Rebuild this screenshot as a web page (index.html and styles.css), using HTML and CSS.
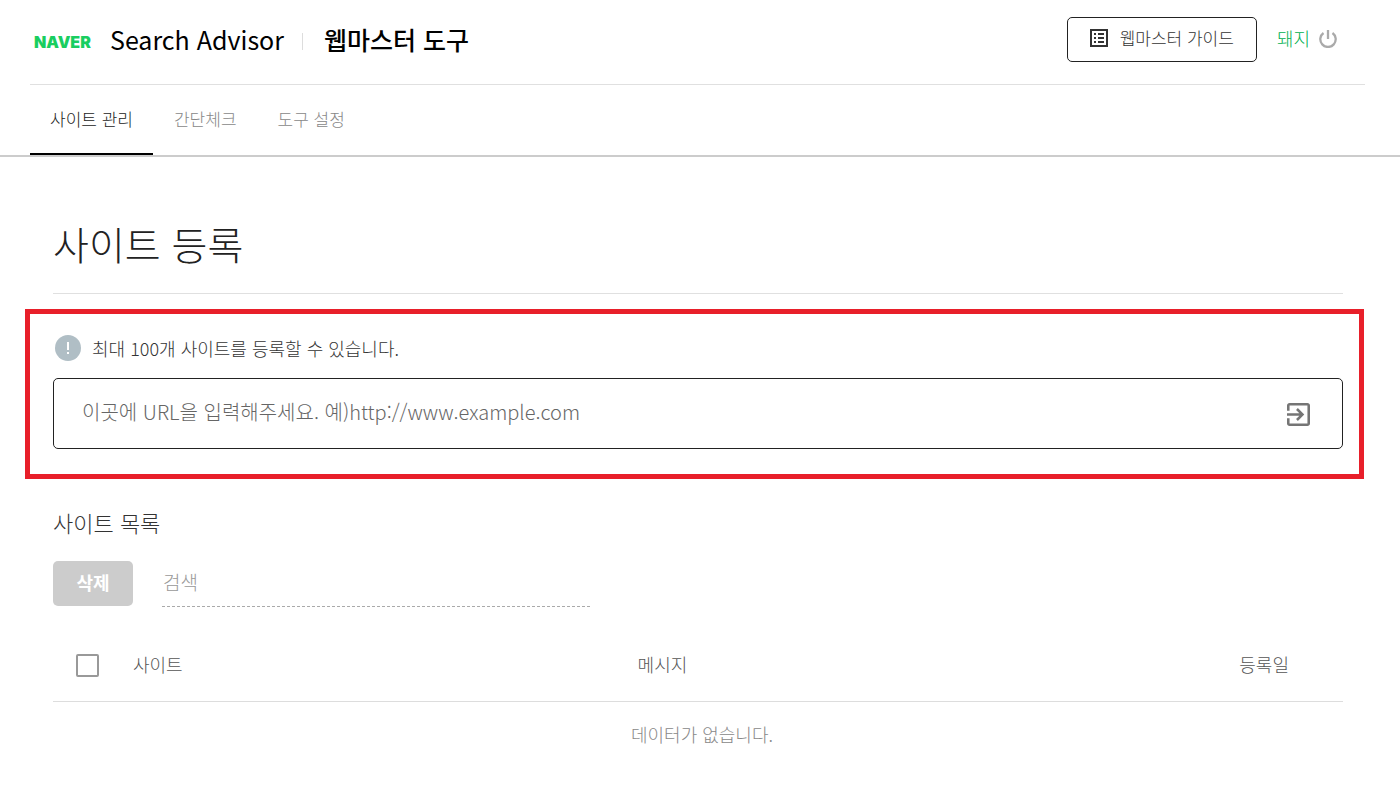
FILE: index.html
```html
<!DOCTYPE html>
<html lang="ko">
<head>
<meta charset="utf-8">
<meta name="viewport" content="width=device-width, initial-scale=1">
<title>웹마스터 도구</title>
<link rel="stylesheet" href="styles.css">
</head>
<body>
<header class="header">
  <div class="brand">
    <a class="brand-naver" href="#">NAVER</a>
    <a class="brand-service" href="#">Search Advisor</a>
    <span class="brand-divider"></span>
    <a class="brand-tool" href="#">웹마스터 도구</a>
  </div>
  <div class="account">
    <a class="guide" href="#">
      <svg class="guide-icon" viewBox="0 0 18 18" aria-hidden="true">
        <rect x="1" y="1" width="16" height="16" fill="none" stroke="currentColor" stroke-width="2"/>
        <path d="M4 4h2v2H4zM4 8h2v2H4zM4 12h2v2H4zM8 4h6v2H8zM8 8h6v2H8zM8 12h6v2H8z" fill="currentColor"/>
      </svg>
      <span>웹마스터 가이드</span>
    </a>
    <a class="user" href="#">돼지</a>
    <button class="power" type="button" aria-label="로그아웃">
      <svg viewBox="0 0 18 18" width="18" height="18" aria-hidden="true">
        <path d="M9 0v9M4.500 3A7.700 7.700 0 1 0 13.500 3" fill="none" stroke="currentColor" stroke-width="2.300"/>
      </svg>
    </button>
  </div>
</header>
<nav class="tabs">
  <a class="tab tab-active" href="#">사이트 관리</a>
  <a class="tab" href="#">간단체크</a>
  <a class="tab" href="#">도구 설정</a>
</nav>
<main class="main">
  <div class="section">
    <h1 class="title">사이트 등록</h1>
  </div>
  <form class="register">
    <label class="notice" for="site-url">
      <svg class="notice-icon" viewBox="0 0 26 26" aria-hidden="true">
        <circle cx="13" cy="13" r="13" fill="#b0bec5"/>
        <path d="M12 7h2v8h-2zM12 17h2v2h-2z" fill="#fff"/>
      </svg>
      <span>최대 100개 사이트를 등록할 수 있습니다.</span>
    </label>
    <div class="url-box">
      <input class="url-input" id="site-url" type="text" placeholder="이곳에 URL을 입력해주세요. 예)http://www.example.com">
      <button class="url-submit" type="submit" aria-label="등록">
        <svg viewBox="3 3 18 18" width="23" height="23" aria-hidden="true">
          <path d="M10.090 15.590 11.500 17l5-5-5-5-1.410 1.410L12.670 11H3v2h9.670l-2.580 2.590zM19 3H5c-1.110 0-2 .9-2 2v4h2V5h14v14H5v-4H3v4c0 1.100.89 2 2 2h14c1.100 0 2-.9 2-2V5c0-1.100-.9-2-2-2z" fill="currentColor"/>
        </svg>
      </button>
    </div>
  </form>
  <section class="section list">
    <h2 class="list-title">사이트 목록</h2>
    <div class="tools">
      <button class="delete" type="button" disabled>삭제</button>
      <input class="search" type="text" placeholder="검색" aria-label="검색">
    </div>
    <table class="sites">
      <thead>
        <tr>
          <th class="col-check"><input class="check" type="checkbox" aria-label="전체 선택"></th>
          <th class="col-site">사이트</th>
          <th class="col-message">메시지</th>
          <th class="col-date">등록일</th>
        </tr>
      </thead>
      <tbody>
        <tr><td class="empty" colspan="4">데이터가 없습니다.</td></tr>
      </tbody>
    </table>
  </section>
</main>
</body>
</html>
```
FILE: styles.css
```css
* {
  box-sizing: border-box;
}

body {
  margin: 0;
  background: #fff;
  color: #333;
  font: 300 18px/28px "Noto Sans CJK KR", sans-serif;
}

a {
  color: inherit;
  text-decoration: none;
}

button,
input {
  font: inherit;
  color: inherit;
}

.header {
  display: flex;
  justify-content: space-between;
  align-items: center;
  height: 85px;
  margin: 0 35px 0 30px;
  padding: 0 28px 6px 4px;
  border-bottom: 1px solid #e0e0e0;
}

.brand {
  display: flex;
  align-items: center;
  color: #000;
  font-size: 25px;
  font-weight: 400;
  line-height: 36px;
}

.brand-naver {
  width: 76px;
  padding-top: 6px;
  color: #19ce60;
  font: 900 16px/24px Inter, sans-serif;
}

.brand-divider {
  width: 1px;
  height: 17px;
  margin: 4px 21px 0 18px;
  background: #ddd;
}

.brand-tool {
  font-weight: 500;
}

.account {
  display: flex;
  align-items: center;
}

.guide {
  display: flex;
  align-items: center;
  gap: 12px;
  height: 45px;
  padding: 0 22px 2px;
  border: 1px solid #222;
  border-radius: 5px;
  font-size: 17px;
}

.guide-icon {
  width: 18px;
  height: 18px;
}

.user {
  margin: 0 9px 2px 20px;
  color: #00b050;
}

.power {
  display: flex;
  padding: 0;
  border: 0;
  background: none;
  color: #aaa;
}

.tabs {
  display: flex;
  gap: 1px;
  padding-left: 30px;
  border-bottom: 2px solid #ccc;
}

.tab {
  height: 70px;
  padding: 20px 20px 0;
  color: #888;
  font-size: 17px;
}

.tab-active {
  border-bottom: 2px solid #000;
  color: #222;
}

.main {
  padding: 0 36px 24px 25px;
}

.section {
  padding: 0 21px 0 28px;
}

.title {
  margin: 0 0 15px;
  padding: 56px 0 20px;
  border-bottom: 1px solid #e0e0e0;
  color: #222;
  font-size: 39px;
  font-weight: 300;
  line-height: 60px;
}

.register {
  padding: 20px 16px 25px 23px;
  border: 5px solid #e81f2a;
}

.notice {
  display: flex;
  align-items: center;
  gap: 11px;
  margin: 0 0 16px 2px;
}

.notice-icon {
  width: 26px;
  height: 26px;
}

.url-box {
  display: flex;
  align-items: center;
  height: 71px;
  padding: 0 32px 0 28px;
  border: 1px solid #222;
  border-radius: 5px;
}

.url-input {
  flex: 1;
  min-width: 0;
  padding: 0 0 4px;
  border: 0;
  outline: 0;
  background: none;
  font-size: 20px;
}

.url-input::placeholder {
  color: #666;
  opacity: 1;
}

.url-submit {
  display: flex;
  padding: 2px 0 0;
  border: 0;
  background: none;
  color: #757575;
}

.list {
  padding-top: 27px;
}

.list-title {
  margin: 0 0 23px;
  font-size: 22px;
  font-weight: 300;
  line-height: 32px;
}

.tools {
  display: flex;
  gap: 29px;
}

.delete {
  width: 80px;
  height: 45px;
  padding: 0 0 3px;
  border: 0;
  border-radius: 5px;
  background: #ccc;
  color: #fff;
  font-weight: 700;
}

.search {
  width: 428px;
  height: 46px;
  padding: 0 0 4px 1px;
  border: 0;
  border-bottom: 1px dashed #aaa;
  outline: 0;
  font-size: 19px;
}

.search::placeholder {
  color: #999;
  opacity: 1;
}

.sites {
  width: 100%;
  margin-top: 23px;
  border-collapse: collapse;
  table-layout: fixed;
}

.sites th {
  height: 71px;
  padding: 0 0 2px;
  border-bottom: 1px solid #ddd;
  color: #555;
  font-weight: 300;
  text-align: left;
}

.sites .col-check {
  width: 80px;
  padding-left: 23px;
}

.sites .col-site {
  width: 24%;
}

.sites .col-message {
  padding-left: 195px;
}

.sites .col-date {
  width: 160px;
  padding-right: 54px;
  text-align: right;
}

.check {
  display: block;
  appearance: none;
  width: 23px;
  height: 23px;
  margin: 3px 0 0;
  border: 2px solid #999;
  border-radius: 2px;
}

.sites .empty {
  padding: 18px 0 18px 8px;
  color: #888;
  text-align: center;
}
```
